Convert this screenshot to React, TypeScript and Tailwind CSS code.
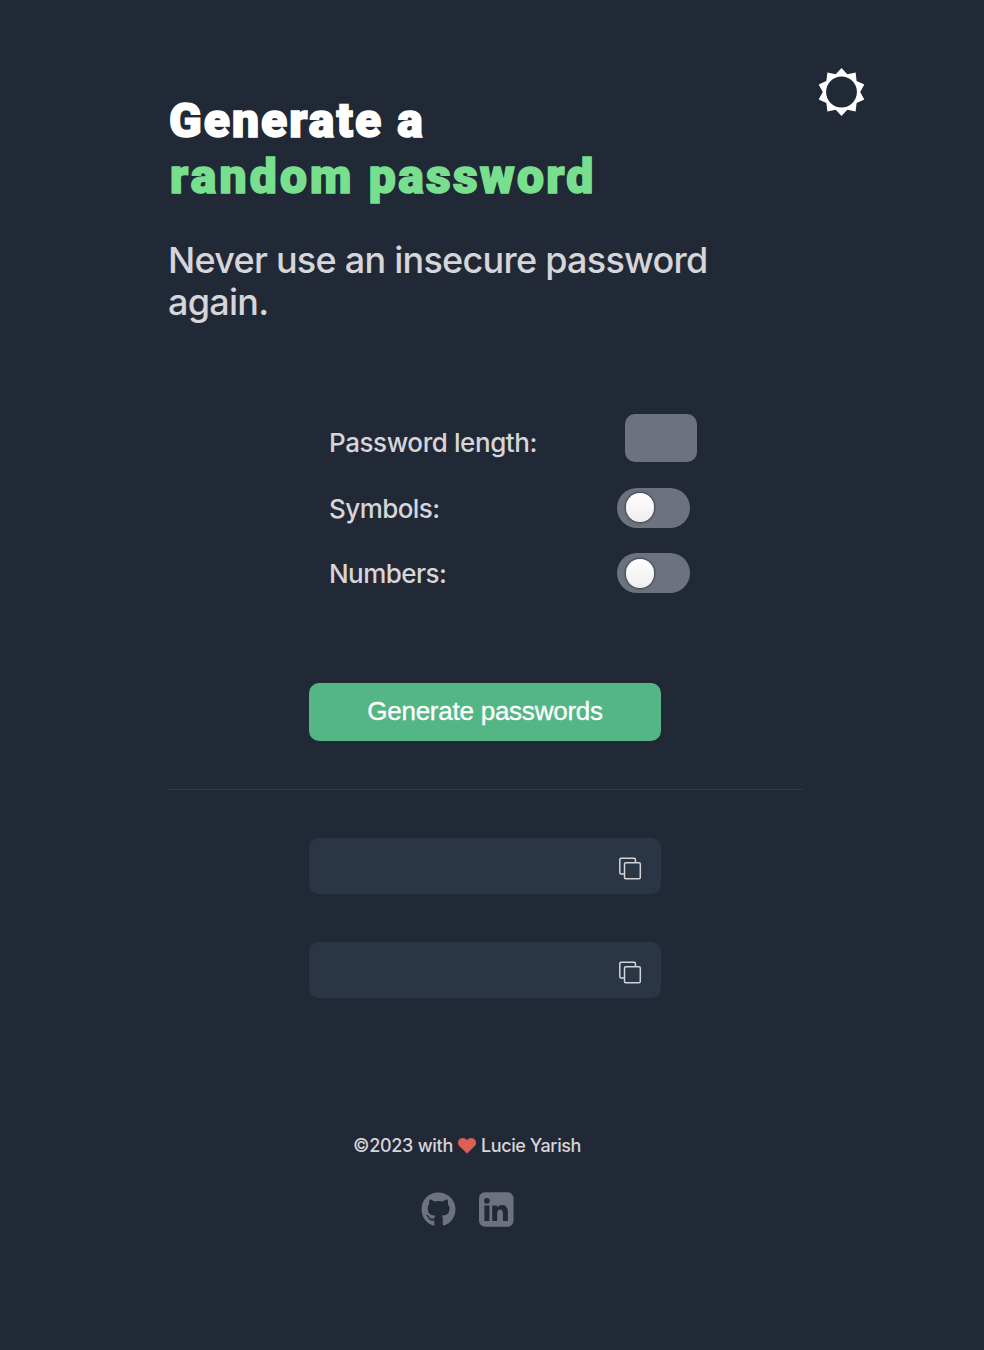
import React from "react";
import { FaGithub } from "react-icons/fa";

function SunIcon() {
  const points = Array.from({ length: 20 }, (_, i) => {
    const radius = i % 2 === 0 ? 24 : 18.7;
    const angle = (Math.PI / 10) * i;
    return `${24.5 + radius * Math.sin(angle)},${24 - radius * Math.cos(angle)}`;
  }).join(" L");
  return (
    <svg className="size-12" viewBox="0 0 48 48" fill="#fff" fillRule="evenodd">
      <path d={`M${points} Z M9.1 24 a15.4 15.4 0 1 0 30.8 0 a15.4 15.4 0 1 0 -30.8 0 Z`} />
    </svg>
  );
}

function CopyIcon() {
  return (
    <svg className="size-6" viewBox="0 0 24 24" fill="none" stroke="#d4d4d8" strokeWidth="1.5" strokeLinejoin="round">
      <rect x="6.5" y="6.8" width="15.8" height="15.9" rx="1.2" />
      <path d="M17.4 6.600V3.400a1.200 1.200 0 0 0-1.200-1.200H3A1.200 1.200 0 0 0 1.800 3.400v13.200A1.200 1.200 0 0 0 3 17.900h3.200" />
    </svg>
  );
}

function HeartIcon() {
  return (
    <svg className="h-[16px] w-[18px]" viewBox="0 0 18 16" fill="#de5f55">
      <path d="M9 15.500 1.500 8.300C-.5 6.200-.4 3 1.500 1.200 3.600-.6 7.200-.3 9 2.200 10.800-.3 14.400-.6 16.500 1.200c1.900 1.800 2 5 0 7.100Z" />
    </svg>
  );
}

function LinkedinIcon() {
  return (
    <svg className="size-[35px]" viewBox="0 0 35 35">
      <rect y="0.300" width="34.500" height="34.500" rx="6" fill="#6d727f" />
      <g fill="#222935">
        <circle cx="7.900" cy="8.800" r="2.900" />
        <path d="M5.400 13.500h5V29h-5zM13.200 13.500H18v2.200c1-1.600 2.600-2.600 4.700-2.600 4.500 0 6.200 2.700 6.200 7.200V29h-5v-7.600c0-2.400-.7-3.800-2.600-3.800-2.100 0-3.100 1.400-3.100 3.800V29h-5z" />
      </g>
    </svg>
  );
}

function Toggle({ raised = false }: { raised?: boolean }) {
  return (
    <button
      role="switch"
      aria-checked="false"
      className={`flex h-10 w-[73px] items-center rounded-full bg-[#6d727f] pl-[9px] ${raised ? "pb-[2px]" : ""}`}
    >
      <span className="h-[29px] w-[28px] rounded-full bg-linear-to-b from-white to-[#eeeeee] shadow-[0_0_2px_1px_rgba(30,35,48,0.6)]" />
    </button>
  );
}

function PasswordField() {
  return (
    <div className="flex h-14 w-[352px] items-center justify-end rounded-[10px] bg-[#2a3546] pt-[3px] pr-[19px]">
      <CopyIcon />
    </div>
  );
}

export default function App() {
  return (
    <div className="h-[1350px] w-[984px] bg-[#222936] pl-[168px] font-['Inter',sans-serif] text-[#d6d5da]">
      <header className="flex h-[352px] justify-between pr-[119px]">
        <div className="pt-[93px]">
          <h1 className="pl-px font-['Roboto',sans-serif] text-[48px] leading-[56px] font-black tracking-[2.05px] whitespace-nowrap text-white [-webkit-text-stroke:1.6px_currentColor]">
            Generate a<br />
            <span className="pl-px tracking-[2.3px] text-[#78df8e]">
              <span className="tracking-[3.2px]">random</span> password
            </span>
          </h1>
          <p className="mt-[34px] w-[580px] text-[36px] leading-[42px] font-[450] tracking-[-0.74px]">
            Never use an insecure password again.
          </p>
        </div>
        <div className="pt-[68px]"><SunIcon /></div>
      </header>
      <main className="w-[634px]">
        <section className="flex h-[331px] flex-col pt-[62px] pl-[161px] text-[26px] leading-8 font-[450] tracking-[-0.42px]">
          <div className="flex h-12 w-[368px] items-center justify-between">
            <span className="pt-[10px]">Password length:</span>
            <div className="h-12 w-[72px] rounded-[10px] bg-[#6d727f]" />
          </div>
          <div className="mt-[26px] flex h-10 w-[361px] items-center justify-between">
            <span className="pt-[2px] tracking-[-0.56px]">Symbols:</span>
            <Toggle raised />
          </div>
          <div className="mt-[25px] flex h-10 w-[361px] items-center justify-between">
            <span className="pt-[2px] tracking-[-0.56px]">Numbers:</span>
            <Toggle />
          </div>
        </section>
        <div className="flex h-[107px] items-start justify-center border-b border-[#353c48]">
          <button className="h-[58px] w-[352px] rounded-[10px] bg-[#55b685] pb-[2px] font-['Liberation_Sans',Arial,sans-serif] text-[26px] tracking-[-0.24px] text-white [-webkit-text-stroke:0.3px_white]">
            Generate passwords
          </button>
        </div>
        <section className="flex flex-col items-center gap-12 pt-12">
          <PasswordField />
          <PasswordField />
        </section>
      </main>
      <footer className="flex w-[598px] flex-col items-center pt-[136px]">
        <p className="flex items-center gap-[5px] text-[18px] leading-6 font-[450] whitespace-nowrap">
          <span className="tracking-[-0.28px]">©2023 with</span>
          <HeartIcon />
          <span className="tracking-[-0.4px]">Lucie Yarish</span>
        </p>
        <div className="mt-[34px] flex gap-[23px]">
          <FaGithub className="size-[35px] text-[#6d727f]" />
          <LinkedinIcon />
        </div>
      </footer>
    </div>
  );
}
